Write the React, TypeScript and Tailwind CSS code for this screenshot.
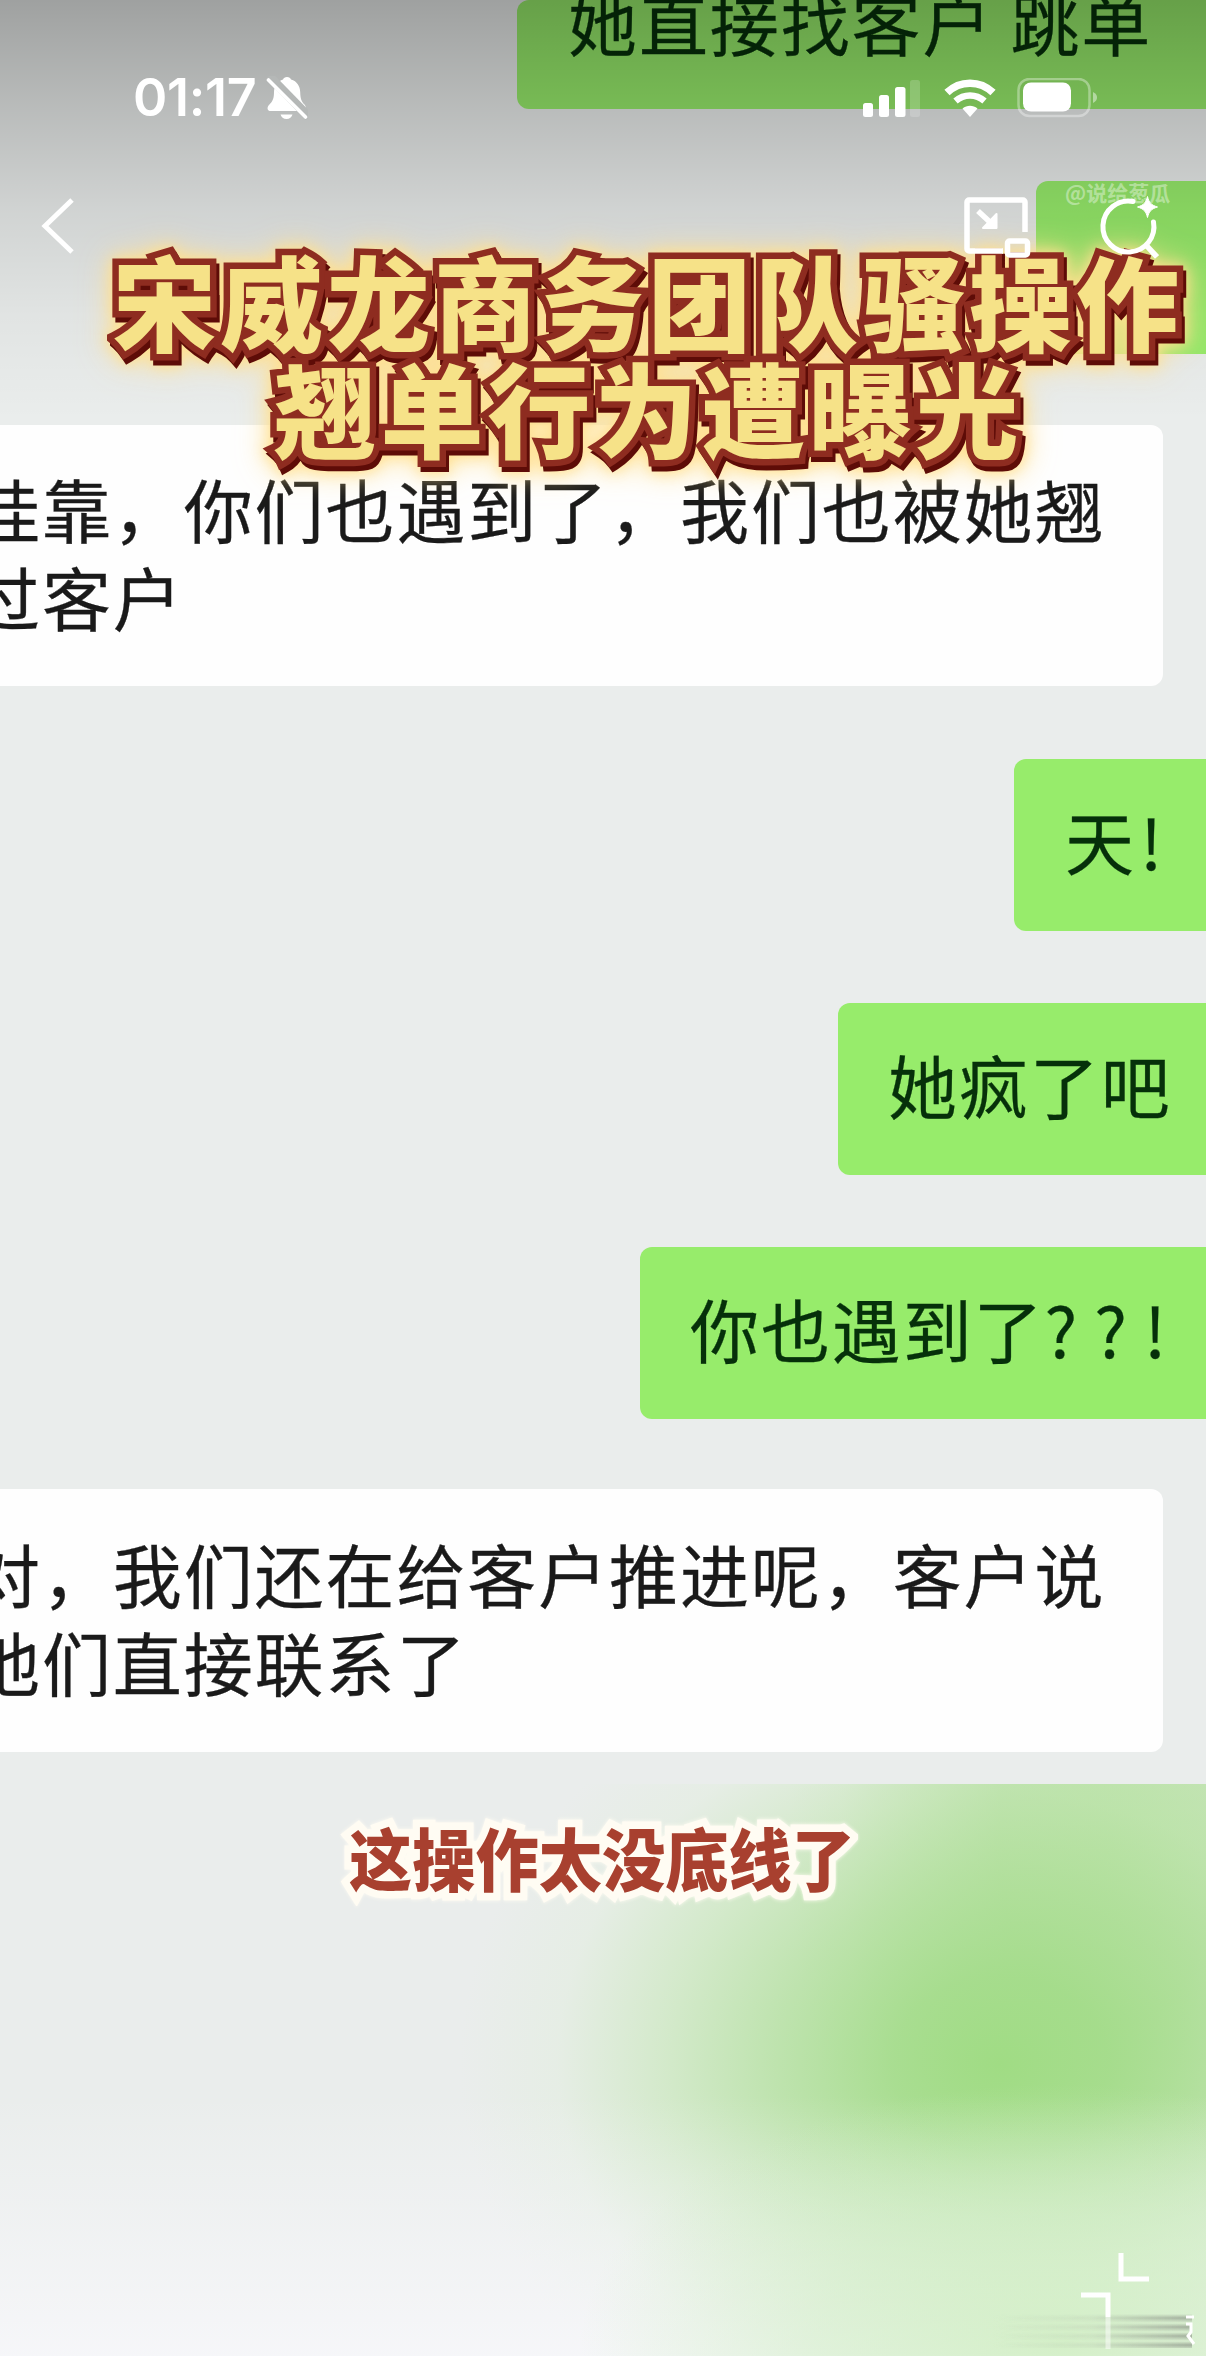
import clsx from "clsx";
import type { ReactNode } from "react";

type BubbleProps = {
  side: "left" | "right";
  className?: string;
  children?: ReactNode;
};

function Bubble({ side, className, children }: BubbleProps) {
  return (
    <div
      className={clsx(
        "shrink-0 whitespace-nowrap text-[69px] leading-[88px] tracking-[1.900px] [-webkit-text-stroke:0.300px_currentColor]",
        side === "left"
          ? "w-[1163px] self-start rounded-r-xl bg-[#fefefe] text-[#1a1a1a]"
          : "self-end rounded-l-xl bg-[#97ec6b] text-[#06300a]",
        className
      )}
    >
      {children}
    </div>
  );
}

function BellOff() {
  return (
    <svg width="42" height="44" viewBox="0 0 42 44" fill="white">
      <path d="M21 1c2.200 0 3.500 1 4 2.500 6 1.800 9 6.500 9.200 12.500.2 7 1.300 9.500 4.300 12.500 1.500 1.500 2 5 0 6.500H3.500C1 34 1 31 3 29c4-4 5-7 5-13C8.200 10 12 5 17 3.500 17.500 2 19 1 21 1z" />
      <path d="M14.500 38.500h12c-.7 2.700-3 4.500-6 4.500s-5.300-1.800-6-4.500z" />
      <path d="M3 0l40 41" stroke="#b5b8b7" strokeWidth="9" />
      <path d="M2.500 4l37 37" stroke="white" strokeWidth="3.600" strokeLinecap="round" />
    </svg>
  );
}

function Signal() {
  return (
    <svg width="58" height="38" viewBox="0 0 58 38" fill="white">
      <rect x="0" y="24" width="10" height="14" rx="2.500" />
      <rect x="16" y="16" width="10" height="22" rx="2.500" />
      <rect x="32" y="8" width="10.500" height="30" rx="2.500" />
      <rect x="47" y="1" width="10" height="37" rx="2.500" opacity="0.180" />
    </svg>
  );
}

function Wifi() {
  return (
    <svg width="52" height="38" viewBox="0 0 52 38" fill="none" stroke="white">
      <path d="M3 13.500C16 1 36 1 49 13.500" strokeWidth="7.500" />
      <path d="M11.500 22c8.500-7.500 20.500-7.500 29 0" strokeWidth="6.500" />
      <path d="M18.500 29.500c4.500-3.700 10.500-3.700 15 0L26 38z" fill="white" stroke="none" />
    </svg>
  );
}

function Battery() {
  return (
    <svg width="82" height="40" viewBox="0 0 82 40" fill="none">
      <rect x="1.500" y="1" width="71" height="37" rx="11" stroke="white" strokeOpacity="0.350" strokeWidth="2.500" />
      <rect x="6" y="4.500" width="48" height="29" rx="8" fill="white" />
      <path d="M76 14c3 1.500 4 3.500 4 5.500s-1 4-4 5.500z" fill="white" fillOpacity="0.450" />
    </svg>
  );
}

function PipIcon() {
  return (
    <svg width="70" height="64" viewBox="0 0 70 64" fill="none" stroke="white" strokeWidth="5.500">
      <path d="M62 36V6a2 2 0 0 0-2-2H6a2 2 0 0 0-2 2v47a2 2 0 0 0 2 2H40" />
      <path d="M15 15l14 13" />
      <path d="M33.500 18v14H20z" fill="white" strokeWidth="2" strokeLinejoin="round" />
      <rect x="44.500" y="45" width="20" height="14" rx="2" />
    </svg>
  );
}

function AiSearchIcon() {
  return (
    <svg width="60" height="64" viewBox="0 0 60 64" fill="none" stroke="white" strokeWidth="5">
      <path d="M34 6.500A25.500 25.500 0 1 0 54.500 27" strokeLinecap="round" />
      <path d="M46 49l12 13" strokeWidth="5.500" />
      <path d="M48.500 1.500c1.500 6 3.500 8.500 10 10.500-6.500 2-8.500 4.500-10 10.500-1.500-6-3.500-8.500-10-10.500 6.500-2 8.500-4.500 10-10.500z" fill="white" strokeWidth="1" />
    </svg>
  );
}

export default function App() {
  return (
    <main className="relative h-[2356px] w-[1206px] overflow-hidden bg-[#eaedec] font-['Noto_Sans_CJK_SC',sans-serif]">
      {/* Chat recording */}
      <section className="flex h-full flex-col">
        <Bubble side="right" className="h-[109px] w-[689px] pl-[51px]">
          <div className="-mt-[23px]">
            她直接找客户<span className="inline-block w-[17px]" />跳单
          </div>
        </Bubble>
        <Bubble side="right" className="mt-[72px] h-[173px] w-[170px]" />
        <Bubble side="left" className="mt-[71px] h-[261px] pt-[39px]">
          <div className="-ml-[29px]">
            <p>挂靠，你们也遇到了，我们也被她翘</p>
            <p>过客户</p>
          </div>
        </Bubble>
        <Bubble side="right" className="mt-[73px] h-[172px] w-[192px] pt-[37px] pl-[51px]">
          天<span className="ml-[4px]">!</span>
        </Bubble>
        <Bubble side="right" className="mt-[72px] h-[172px] w-[368px] pt-[37px] pl-[50px]">
          她疯了吧
        </Bubble>
        <Bubble side="right" className="mt-[72px] h-[172px] w-[566px] pt-[37px] pl-[50px]">
          你也遇到了<span className="tracking-[17px]">??!</span>
        </Bubble>
        <Bubble side="left" className="mt-[70px] h-[263px] pt-[40px]">
          <div className="-ml-[29px]">
            <p>对，我们还在给客户推进呢，客户说</p>
            <p>他们直接联系了</p>
          </div>
        </Bubble>

        {/* Smeared green area under the last message */}
        <div className="relative mt-[32px] h-[572px] shrink-0 overflow-hidden">
          <div className="absolute inset-0 bg-[radial-gradient(ellipse_320px_520px_at_1110px_60px,#b0dd9a_0%,#b6dea3_35%,rgba(196,227,181,0.700)_62%,rgba(215,233,207,0.300)_84%,rgba(234,237,236,0)_100%)]" />
          <div className="absolute inset-0 bg-[radial-gradient(ellipse_540px_440px_at_1000px_280px,#a0dc84_0%,rgba(163,220,137,0.900)_20%,rgba(176,224,154,0.750)_42%,rgba(196,231,180,0.600)_62%,rgba(222,238,216,0.350)_82%,rgba(234,237,236,0)_100%)]" />
          <div className="absolute inset-x-0 bottom-0 h-[260px] bg-linear-to-b from-[#f8f8fb]/0 to-[#f8f8fb]/85" />
          <div className="absolute inset-0 bg-[radial-gradient(ellipse_480px_260px_at_1060px_560px,rgba(205,238,190,0.800)_0%,rgba(208,238,196,0.550)_50%,rgba(220,240,212,0)_100%)]" />
        </div>
      </section>

      {/* Top scrim */}
      <div className="absolute inset-x-0 top-0 h-[420px] bg-[linear-gradient(to_bottom,rgba(0,0,0,0.320)_0%,rgba(0,0,0,0.210)_25%,rgba(0,0,0,0.110)_50%,rgba(0,0,0,0.040)_75%,transparent_100%)]" />

      {/* Headline */}
      <h1 className="absolute top-[246px] left-[108px] w-[1080px] text-center text-[103px] leading-[107px] font-black tracking-[4px] whitespace-nowrap text-[#f6e288] [-webkit-text-stroke:13px_#8e2c20] [paint-order:stroke_fill] [filter:drop-shadow(3px_5px_0_#5e0c07)_drop-shadow(0_0_7px_#ffdf8e)_drop-shadow(0_0_14px_#ffe08ecc)]">
        <span className="block">宋威龙商务团队骚操作</span>
        <span className="block">翘单行为遭曝光</span>
      </h1>

      {/* Status bar */}
      <div className="absolute inset-x-0 top-[76px] flex h-[44px] items-center pr-[107px] pl-[133px] text-white">
        <span className="font-['Inter',sans-serif] text-[52px] leading-none font-semibold -tracking-[0.300px]">01:17</span>
        <span className="ml-[10px]"><BellOff /></span>
        <div className="ml-auto flex items-center">
          <Signal />
          <span className="ml-[23px]"><Wifi /></span>
          <span className="ml-[21px]"><Battery /></span>
        </div>
      </div>

      {/* Player controls */}
      <div className="absolute inset-x-0 top-[196px] flex items-start pr-[47px] pl-[40px]">
        <svg width="36" height="60" viewBox="0 0 36 60" fill="none" stroke="white" strokeWidth="5">
          <path d="M32 4L5 30l27 26" />
        </svg>
        <span className="ml-auto"><PipIcon /></span>
        <span className="-mt-[1px] ml-[66px]"><AiSearchIcon /></span>
      </div>
      <span className="absolute top-[180px] left-[1065px] text-[21px] leading-[24px] font-bold text-white/40">@说给葱瓜</span>

      {/* Caption */}
      <p className="absolute top-[1809px] left-[317px] w-[570px] scale-x-[0.930] text-center text-[68px] leading-[96px] font-black whitespace-nowrap text-[#a8402f] [-webkit-text-stroke:15px_#fffcf3] [paint-order:stroke_fill] [filter:drop-shadow(0_0_2px_#fffcf3)]">
        这操作太没底线了
      </p>

      {/* Collapse icon and the streak beneath it */}
      <div className="absolute right-[14px] bottom-[8px] h-[34px] w-[200px] bg-linear-to-r from-transparent via-[#9aa096]/15 to-[#7c8279]/60 [mask-image:repeating-linear-gradient(to_bottom,transparent_0px,black_4px,transparent_9px)]" />
      <svg className="absolute right-0 bottom-0" width="130" height="110" viewBox="0 0 130 110" fill="none" stroke="white" strokeWidth="5">
        <path d="M45 7v26h28" />
        <path d="M5 49h27v22" />
        <path d="M32 71v32" strokeOpacity="0.500" />
        <path d="M110 71h8M110 78h5v8l-3 4 6 8" strokeWidth="3" />
      </svg>
    </main>
  );
}
